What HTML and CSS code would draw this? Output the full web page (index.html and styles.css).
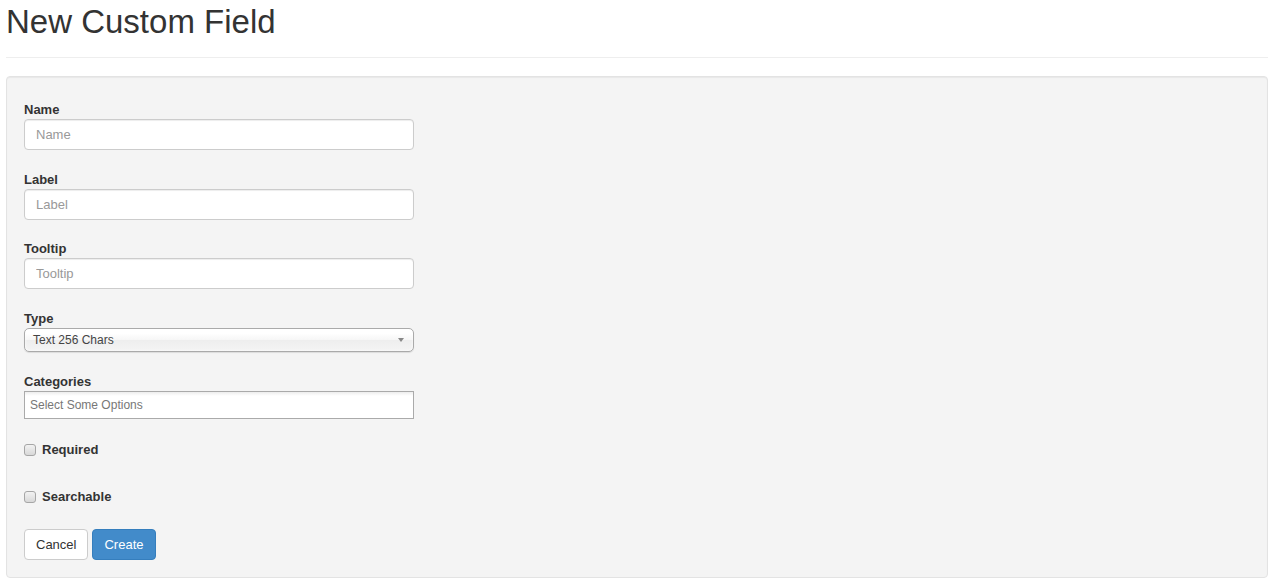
FILE: index.html
```html
<!DOCTYPE html>
<html lang="en">
<head>
  <meta charset="UTF-8" />
  <meta name="viewport" content="width=device-width, initial-scale=1.0" />
  <title>New Custom Field</title>
  <link rel="stylesheet" href="styles.css">
</head>
<body>
  <div class="page-header">
    <h1>New Custom Field</h1>
  </div>

  <form class="well">
    <div class="form-group">
      <label for="name">Name</label>
      <input type="text" id="name" class="form-control" placeholder="Name" />
    </div>

    <div class="form-group">
      <label for="label">Label</label>
      <input type="text" id="label" class="form-control" placeholder="Label" />
    </div>

    <div class="form-group">
      <label for="tooltip">Tooltip</label>
      <input type="text" id="tooltip" class="form-control" placeholder="Tooltip" />
    </div>

    <div class="form-group">
      <label>Type</label>
      <div class="chosen-single">
        <span>Text 256 Chars</span>
        <b class="arrow"></b>
      </div>
    </div>

    <div class="form-group">
      <label>Categories</label>
      <div class="chosen-multi">Select Some Options</div>
    </div>

    <div class="checkbox">
      <input type="checkbox" id="required" />
      <label for="required">Required</label>
    </div>

    <div class="checkbox last">
      <input type="checkbox" id="searchable" />
      <label for="searchable">Searchable</label>
    </div>

    <div class="actions">
      <button type="button" class="btn">Cancel</button>
      <button type="submit" class="btn btn-primary">Create</button>
    </div>
  </form>
</body>
</html>
```

FILE: styles.css
```css
body { margin: 0; padding: 0 12px 0 6px; font-family: "Liberation Sans", Arial, sans-serif; font-size: 13px; color: #333; background: #fff; }
.page-header { border-bottom: 1px solid #eee; padding-bottom: 9px; margin-bottom: 18px; }
h1 { font-size: 33px; font-weight: normal; line-height: 1.1; margin: 4px 0 8px; }
.well { background: #f4f4f4; border: 1px solid #e3e3e3; border-radius: 4px; box-shadow: inset 0 1px 1px rgba(0,0,0,.05); padding: 24px 17px 17px; margin: 0; }
label { display: block; font-weight: bold; line-height: 18px; }
.form-group { margin-bottom: 20.6px; }
.form-control { display: block; box-sizing: border-box; width: 390px; height: 31px; padding: 0 11px; font: inherit; color: #555; background: #fff; border: 1px solid #ccc; border-radius: 4px; box-shadow: inset 0 1px 1px rgba(0,0,0,.075); margin: 0; }
.form-control::placeholder { color: #999; }
.chosen-single { position: relative; box-sizing: border-box; width: 390px; height: 24px; line-height: 22px; padding-left: 8px; font-size: 12px; color: #444; border: 1px solid #aaa; border-radius: 5px; background: linear-gradient(#fff 20%, #f6f6f6 50%, #eee 52%, #f4f4f4 100%); box-shadow: inset 0 0 3px #fff, 0 1px 1px rgba(0,0,0,.1); }
.arrow { position: absolute; right: 9px; top: 9px; width: 0; height: 0; border-left: 3px solid transparent; border-right: 3px solid transparent; border-top: 4px solid #888; }
.chosen-multi { box-sizing: border-box; width: 390px; height: 28px; line-height: 26px; padding-left: 5px; font-size: 12px; color: #777; border: 1px solid #aaa; background: linear-gradient(#eee 1%, #fff 15%); }
.checkbox { display: flex; align-items: center; height: 18px; padding-top: 1.5px; margin: 0 0 27.5px; }
.checkbox.last { margin-bottom: 23px; }
.checkbox input { appearance: none; box-sizing: border-box; width: 12px; height: 12px; margin: 0 6px 0 0; border: 1px solid #a6a6a6; border-radius: 3px; background: linear-gradient(#f2f2f2, #d8d8d8); }
.actions { display: flex; gap: 4px; }
.btn { box-sizing: border-box; height: 31px; padding: 0 11px; font: inherit; line-height: 29px; color: #333; background: #fff; border: 1px solid #ccc; border-radius: 4px; cursor: pointer; }
.btn-primary { color: #fff; background: #428bca; border-color: #357ebd; }
```
